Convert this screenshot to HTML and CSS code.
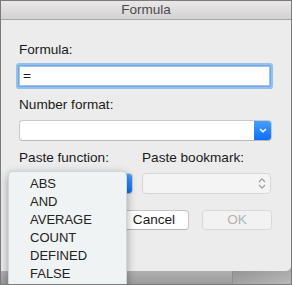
FILE: index.html
```html
<!DOCTYPE html>
<html>
<head>
<meta charset="utf-8">
<link rel="stylesheet" href="styles.css">
</head>
<body>
<div class="screen">
  <div class="window">
    <div class="titlebar">Formula</div>
    <div class="content">
      <div class="label label-first">Formula:</div>
      <div class="input">=</div>
      <div class="label label-gap">Number format:</div>
      <div class="select">
        <span class="select-btn">
          <svg width="8" height="5" viewBox="0 0 8 5"><path d="M1 1 L4 3.8 L7 1" fill="none" stroke="#fff" stroke-width="1.4"/></svg>
        </span>
      </div>
      <div class="cols">
        <div class="col col-left">
          <div class="label">Paste function:</div>
          <div class="select">
            <span class="select-btn">
              <svg width="8" height="10" viewBox="0 0 8 10"><path d="M1 4 L4 1.3 L7 4 M1 6 L4 8.7 L7 6" fill="none" stroke="#fff" stroke-width="1.3"/></svg>
            </span>
          </div>
        </div>
        <div class="col col-right">
          <div class="label">Paste bookmark:</div>
          <div class="select select-disabled">
            <span class="updown">
              <svg width="8" height="13" viewBox="0 0 8 13"><path d="M1 5 L4 1.8 L7 5 M1 8 L4 11.2 L7 8" fill="none" stroke="#9c9c9c" stroke-width="1.1"/></svg>
            </span>
          </div>
        </div>
      </div>
      <div class="buttons">
        <div class="btn">Cancel</div>
        <div class="btn btn-disabled">OK</div>
      </div>
    </div>
  </div>
  <div class="desk">
    <div class="desk-left"></div>
    <div class="desk-right"></div>
  </div>
  <div class="menu">
    <div class="menu-item">ABS</div>
    <div class="menu-item">AND</div>
    <div class="menu-item">AVERAGE</div>
    <div class="menu-item">COUNT</div>
    <div class="menu-item">DEFINED</div>
    <div class="menu-item">FALSE</div>
  </div>
</div>
</body>
</html>
```

FILE: styles.css
```css
* { box-sizing: border-box; }
html, body { margin: 0; padding: 0; }
body {
  font-family: "Liberation Sans", Arial, sans-serif;
  font-size: 13px;
  color: #1c1c1c;
  background: #8a8a8a;
}
.screen {
  position: relative;
  width: 292px;
  height: 285px;
  border: 1px solid #7a7a7a;
  overflow: hidden;
  background: #a9a9a9;
  display: flex;
  flex-direction: column;
}
.window {
  width: 290px;
  background: #ececec;
  border-bottom-right-radius: 5px;
  position: relative;
  z-index: 1;
}
.titlebar {
  height: 19px;
  line-height: 18px;
  text-align: center;
  color: #4b4b4b;
  font-size: 13.5px;
  background: linear-gradient(#e9e7e8, #d4d2d3);
  border-bottom: 1px solid #a4a4a4;
}
.content {
  padding: 0 19px 19px 18px;
  height: 229px;
}
.label {
  line-height: 16px;
  height: 16px;
  font-size: 13.6px;
  color: #1a1a1a;
}
.label-first { margin-top: 22px; }
.input {
  margin-top: 8px;
  width: 251px;
  height: 20px;
  background: #fff;
  border: 1px solid #a7c3e4;
  border-radius: 1px;
  box-shadow: 0 0 0 1px #6da8e8, 0 0 0 3px #94c0ee;
  line-height: 18px;
  padding-left: 3px;
  font-size: 13.5px;
}
.label-gap { margin-top: 11px; }
.select {
  margin-top: 7px;
  height: 21px;
  background: #fff;
  border: 1px solid #c9c9c9;
  border-bottom-color: #b9b9b9;
  border-radius: 4px;
  display: flex;
  justify-content: flex-end;
  overflow: hidden;
}
.select-btn {
  width: 18px;
  margin: -1px -1px -1px 0;
  background: linear-gradient(#4aa2fd, #0a6cf8);
  border-radius: 0 4px 4px 0;
  display: flex;
  align-items: center;
  justify-content: center;
}
.cols {
  display: flex;
  gap: 9px;
  margin-top: 9px;
}
.col-left { width: 114px; }
.col-right { width: 129px; }
.select-disabled {
  background: #f4f4f4;
  border-color: #d7d7d7;
  align-items: center;
  padding-right: 4px;
}
.updown { display: flex; }
.buttons {
  display: flex;
  justify-content: flex-end;
  gap: 13px;
  margin-top: 16px;
}
.btn {
  width: 70px;
  height: 20px;
  line-height: 18px;
  text-align: center;
  font-size: 13.6px;
  background: #fff;
  border: 1px solid #c6c6c6;
  border-bottom-color: #b4b4b4;
  border-radius: 4px;
  color: #1a1a1a;
}
.btn-disabled {
  background: #f2f2f2;
  border-color: #d9d9d9;
  color: #b3b3b3;
}
.desk {
  flex: 1;
  display: flex;
  margin-top: -6px;
}
.desk-left {
  width: 232px;
  background: linear-gradient(#b9b9b9, #9c9c9c);
  border-right: 1px solid #8e8e8e;
}
.desk-right {
  flex: 1;
  background: linear-gradient(160deg, #8f8f8f, #b8b8b8);
}
.menu {
  position: absolute;
  left: 7px;
  top: 170px;
  width: 119px;
  height: 140px;
  z-index: 2;
  background: #f0f3f3;
  border: 1px solid rgba(0,0,0,0.12);
  border-radius: 5px;
  box-shadow: 0 3px 10px rgba(0,0,0,0.35);
  padding-top: 3px;
}
.menu-item {
  height: 18px;
  line-height: 18px;
  padding-left: 21px;
  color: #222;
}
```
